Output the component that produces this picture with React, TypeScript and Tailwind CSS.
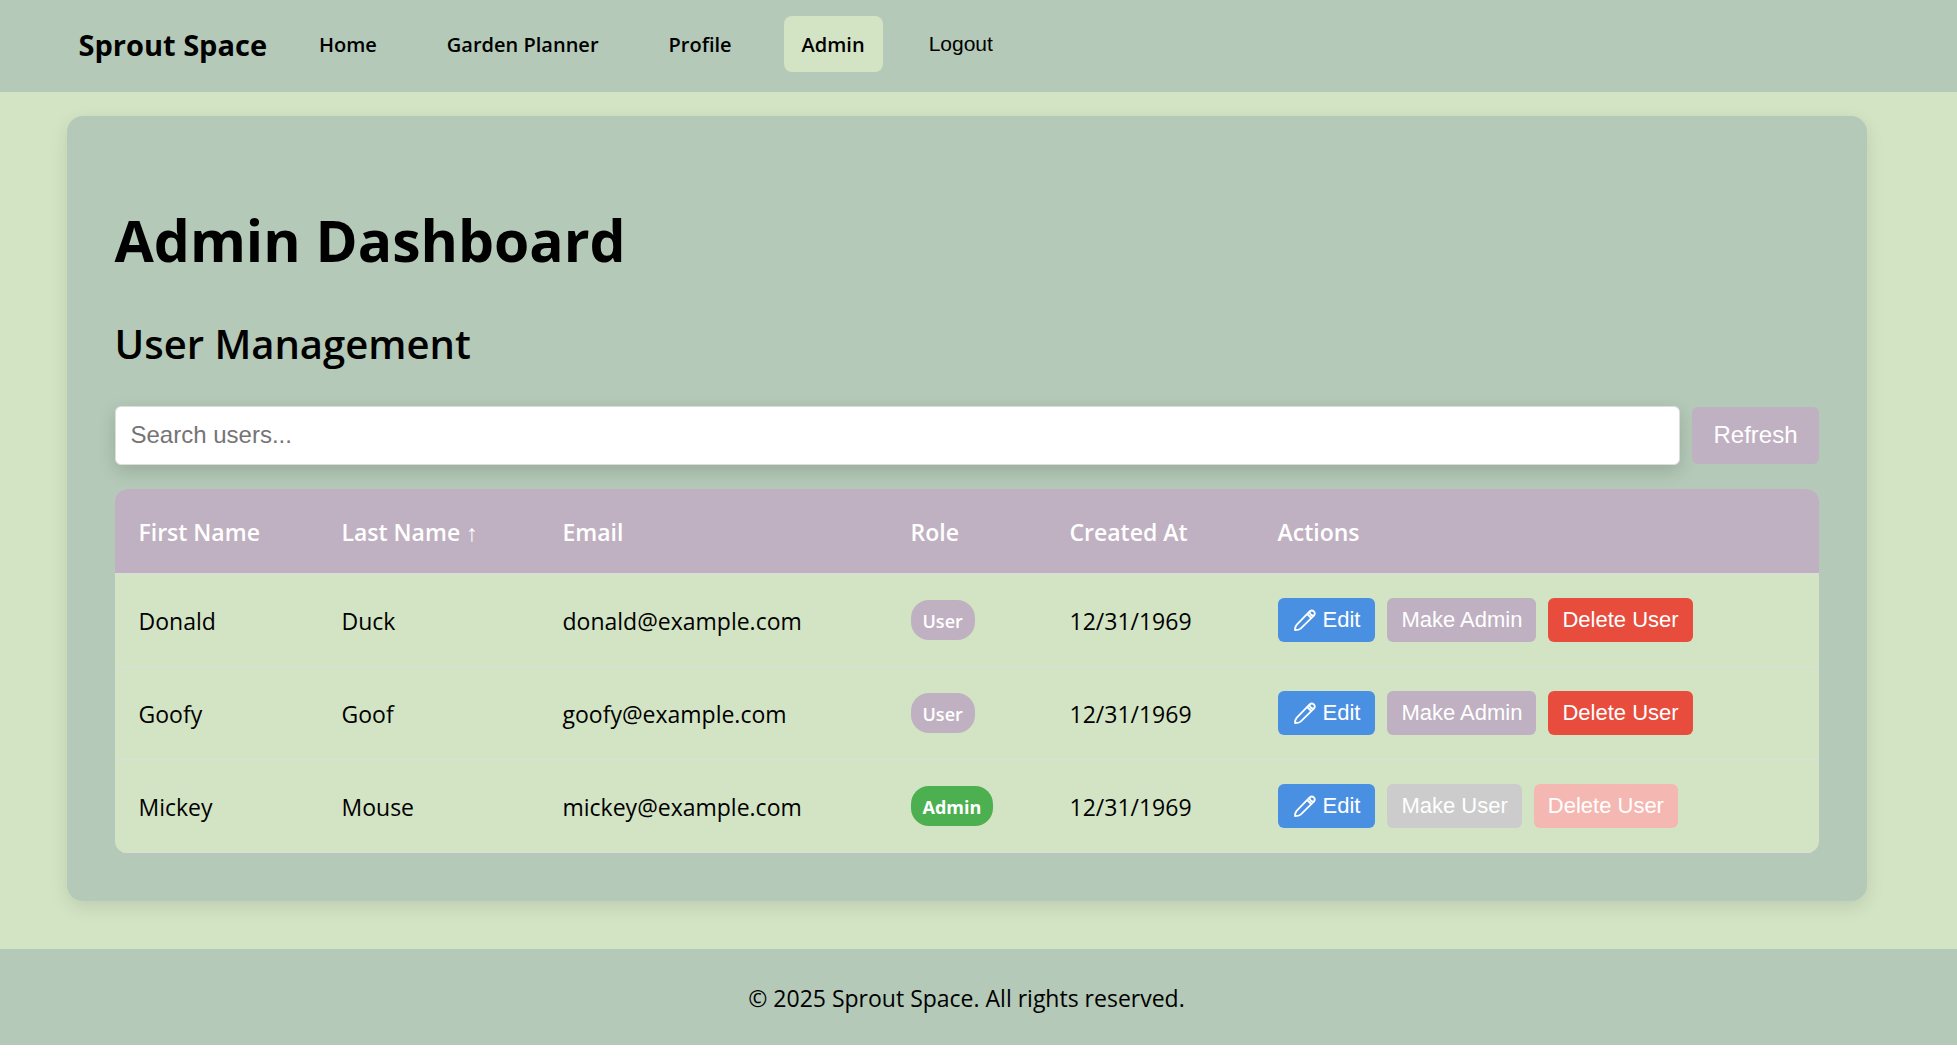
const users = [
  { first: "Donald", last: "Duck", email: "donald@example.com", admin: false },
  { first: "Goofy", last: "Goof", email: "goofy@example.com", admin: false },
  { first: "Mickey", last: "Mouse", email: "mickey@example.com", admin: true },
];

const columns = [
  { label: "First Name", width: "w-[203px]" },
  { label: "Last Name ↑", width: "w-[221px]" },
  { label: "Email", width: "w-[348px]" },
  { label: "Role", width: "w-[159px]" },
  { label: "Created At", width: "w-[208px]" },
  { label: "Actions", width: "" },
];

const action =
  "flex h-11 items-center rounded-md pb-px font-['Liberation_Sans',sans-serif] text-[22px] leading-none text-white";

const cell = "border-b border-[#dddddd] px-6 pt-0.5";

function Pencil() {
  return (
    <svg viewBox="0 0 24 24" className="size-6" fill="none" stroke="currentColor" strokeWidth="1.8" strokeLinejoin="round" aria-hidden="true">
      <path d="M2 22 C2 20 2.4 18.2 3.6 16.8 L16.9 3.2 a3 3 0 0 1 4.2 4.2 L7.6 20.6 C6.2 21.7 4 22 2 22 Z" />
      <path d="M16.9 3.2 C16 5.6 18.4 8.2 21.1 7.4" />
      <path d="M14.2 6 18.2 10" />
    </svg>
  );
}

function NavLink({ label, active = false }: { label: string; active?: boolean }) {
  return (
    <a
      href="#"
      className={
        active
          ? "flex h-14 items-center rounded-lg bg-[#d3e4c4] px-[18px] pt-0.5 font-semibold"
          : "flex h-14 items-center rounded-lg px-[18px] pt-0.5 font-semibold"
      }
    >
      {label}
    </a>
  );
}

export default function App() {
  return (
    <div className="min-h-screen bg-white font-['Open_Sans',sans-serif] text-[23px] leading-9 text-black">
      <header className="bg-[#b4c9b7] pr-6">
        <nav className="mx-auto flex h-[92px] max-w-[1800px] items-start px-3 pt-4">
          <a href="#" className="flex h-[58px] items-center text-[29px] font-bold">Sprout Space</a>
          <div className="ml-[34px] flex gap-[34px] text-[20px]">
            <NavLink label="Home" />
            <NavLink label="Garden Planner" />
            <NavLink label="Profile" />
            <NavLink label="Admin" active />
            <button className="flex h-14 items-center px-3 font-['Liberation_Sans',sans-serif] text-[21px]">Logout</button>
          </div>
        </nav>
      </header>

      <div className="bg-[#d3e4c4] pt-6 pr-6 pb-12">
        <main className="mx-auto max-w-[1800px] rounded-2xl bg-[#b4c9b7] px-12 pt-20 pb-12 shadow-[0_6px_18px_rgba(0,0,0,0.1)]">
          <h1 className="text-[57px] leading-[88px] font-bold">Admin Dashboard</h1>
          <h2 className="mt-6 text-[40px] leading-[72px] font-semibold">User Management</h2>

          <div className="mt-[26px] flex items-center gap-3">
            <input
              type="search"
              aria-label="Search users"
              placeholder="Search users..."
              className="h-[59px] min-w-0 flex-1 rounded-md border border-[#dddddd] bg-white px-[15px] pb-0.5 font-['Liberation_Sans',sans-serif] text-2xl shadow-[0_6px_18px_rgba(0,0,0,0.15)] placeholder:text-[#757575]"
            />
            <button className="h-[57px] rounded-md bg-[#bfb1c1] px-[21px] pb-0.5 font-['Liberation_Sans',sans-serif] text-2xl text-white">
              Refresh
            </button>
          </div>

          <div className="mt-6 overflow-hidden rounded-xl">
            <table className="w-full table-fixed border-separate border-spacing-0 bg-[#d3e4c4] text-left">
              <colgroup>
                {columns.map((c) => (
                  <col key={c.label} className={c.width} />
                ))}
              </colgroup>
              <thead className="bg-[#bfb1c1] text-white">
                <tr>
                  {columns.map((c) => (
                    <th key={c.label} className="border-b border-[#dddddd] px-6 pt-[25px] pb-[23px] font-semibold">{c.label}</th>
                  ))}
                </tr>
              </thead>
              <tbody>
                {users.map((u) => (
                  <tr key={u.email}>
                    <td className={cell}>{u.first}</td>
                    <td className={cell}>{u.last}</td>
                    <td className={cell}>{u.email}</td>
                    <td className="border-b border-[#dddddd] px-6">
                      <span
                        className={
                          u.admin
                            ? "flex h-10 w-fit items-center rounded-[18px] bg-[#4caf50] px-3 pt-0.5 text-lg font-bold text-white"
                            : "flex h-10 w-fit items-center rounded-[18px] bg-[#bfb1c1] px-3 pt-0.5 text-lg font-semibold text-white"
                        }
                      >
                        {u.admin ? "Admin" : "User"}
                      </span>
                    </td>
                    <td className={cell}>12/31/1969</td>
                    <td className="border-b border-[#dddddd] p-6">
                      <div className="flex gap-3">
                        <button className={`${action} gap-1.5 bg-[#4a90e2] px-[15px]`}>
                          <Pencil />
                          Edit
                        </button>
                        <button disabled={u.admin} className={`${action} px-[14px] ${u.admin ? "bg-[#cccccc]" : "bg-[#bfb1c1]"}`}>
                          {u.admin ? "Make User" : "Make Admin"}
                        </button>
                        <button disabled={u.admin} className={`${action} px-[14px] ${u.admin ? "bg-[#f5b7b1]" : "bg-[#e74c3c]"}`}>
                          Delete User
                        </button>
                      </div>
                    </td>
                  </tr>
                ))}
              </tbody>
            </table>
          </div>
        </main>
      </div>

      <footer className="bg-[#b4c9b7] pt-[31px] pr-6 pb-[29px] text-center">
        <p>© 2025 Sprout Space. All rights reserved.</p>
      </footer>
    </div>
  );
}
